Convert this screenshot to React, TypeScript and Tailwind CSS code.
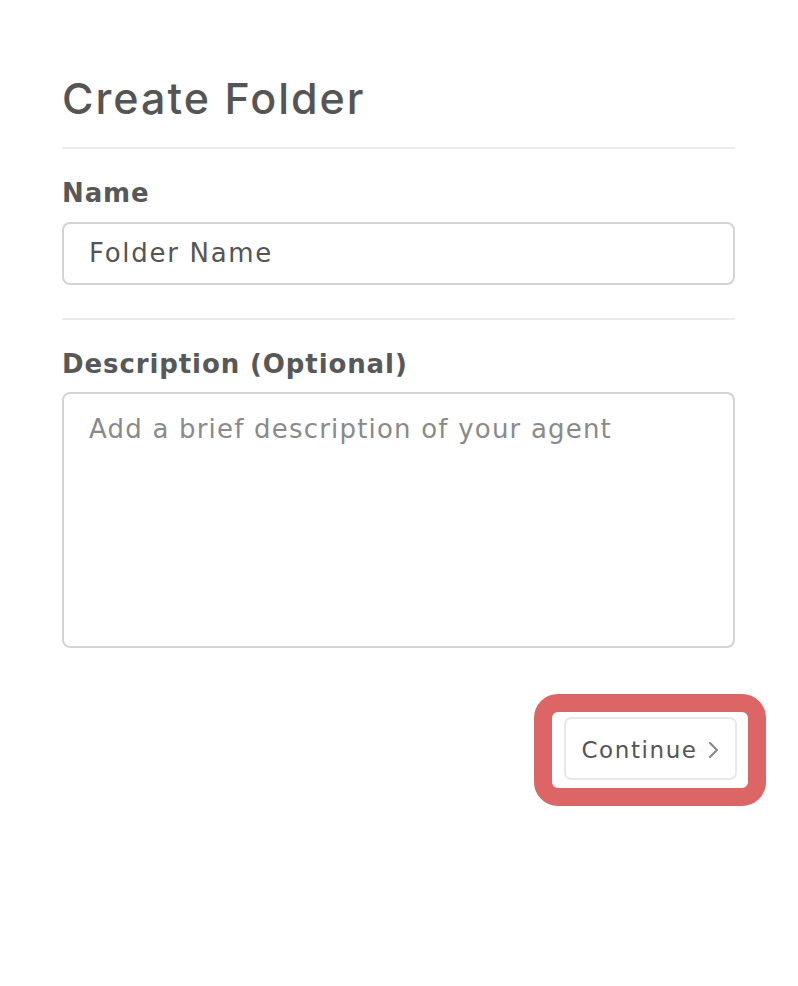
import React from "react";

export default function App() {
  return (
    <div className="w-[798px] h-[986px] bg-white" style={{ fontFamily: "'DejaVu Sans', sans-serif" }}>
      <div className="pl-[62px] pr-[63px] pt-[72px]">
        <h1 className="text-[43px] leading-[52px] font-medium text-[#555555] tracking-[2px]" style={{ fontFamily: "Inter, sans-serif" }}>Create Folder</h1>
        <div className="mt-[23px] h-[2px] bg-[#ebebeb]" />
        <div className="mt-[27px] text-[26px] leading-[34px] font-bold text-[#585858] tracking-[0.9px]">Name</div>
        <div className="mt-[12px] h-[63px] rounded-[8px] border-2 border-[#d4d4d4] flex items-center pl-[25px] text-[26px] text-[#555555] tracking-[1.7px]">
          Folder Name
        </div>
        <div className="mt-[33px] h-[2px] bg-[#ebebeb]" />
        <div className="mt-[27px] text-[26px] leading-[34px] font-bold text-[#585858] tracking-[0.9px]">Description (Optional)</div>
        <div className="mt-[11px] h-[256px] rounded-[8px] border-2 border-[#d4d4d4] pl-[25px] pt-[16px] text-[26px] leading-[38px] text-[#8a8a8a] tracking-[1.2px]">
          Add a brief description of your agent
        </div>
        <div className="mt-[46px] flex justify-end -mr-[31px]">
          <div className="rounded-[24px] border-[18px] border-[#dc6666] pl-[12px] pr-[11px] pt-[5px] pb-[8px]">
            <div className="w-[173px] h-[63px] rounded-[7px] border-2 border-[#e8e8e8] flex items-center justify-center gap-[10px] text-[23px] text-[#555555] tracking-[1.6px] pt-[3px]">
              <span>Continue</span>
              <svg width="12" height="22" viewBox="0 0 12 22" fill="none">
                <path d="M2 4 L9 11 L2 18" stroke="#8a8a8a" strokeWidth="2.2" strokeLinecap="round" strokeLinejoin="round" />
              </svg>
            </div>
          </div>
        </div>
      </div>
    </div>
  );
}
